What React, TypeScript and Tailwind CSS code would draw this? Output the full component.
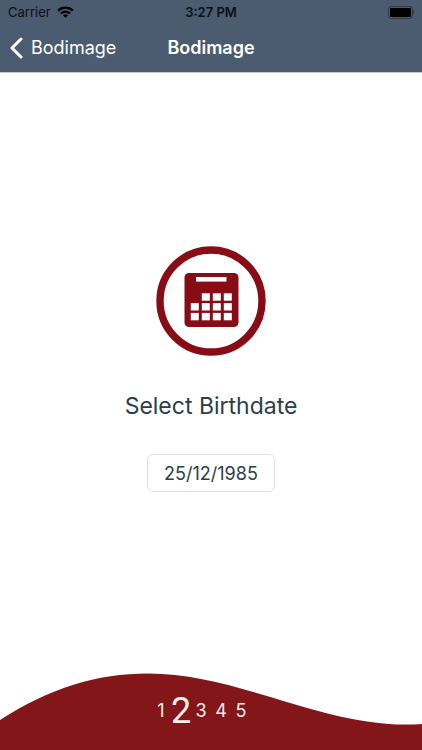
import { useState } from "react";

const STEPS = [1, 2, 3, 4, 5];

function StatusBar() {
  return (
    <div className="grid h-6 grid-cols-3 items-center px-2 text-[13px] leading-4 text-[#0b1017]">
      <div className="flex items-center gap-1.5">
        <span>Carrier</span>
        <svg viewBox="0 0 17 12" className="h-3 w-[17px]" fill="none" stroke="black" strokeWidth="2.2" aria-hidden="true">
          <path d="M1.1 4.6C5.2 0.6 11.8 0.6 15.9 4.6" />
          <path d="M3.9 7.5C6.5 5 10.5 5 13.1 7.5" />
          <path d="M8.5 11.8L5.9 9.2C7.3 7.8 9.7 7.8 11.1 9.2Z" fill="black" stroke="none" />
        </svg>
      </div>
      <span className="text-center font-semibold">3:27 PM</span>
      <svg viewBox="0 0 27 13" className="h-[13px] w-[27px] justify-self-end" aria-hidden="true">
        <rect x="1.5" y="0.5" width="24" height="12" rx="3" fill="none" stroke="#1c2633" strokeOpacity="0.65" />
        <rect x="3" y="2" width="21" height="9" rx="1" fill="black" />
        <path d="M26 4.5C27.4 5.1 27.4 7.9 26 8.5Z" fill="#1c2633" fillOpacity="0.7" />
      </svg>
    </div>
  );
}

function NavBar() {
  return (
    <nav className="grid h-12 grid-cols-[1fr_auto_1fr] items-center px-2.5 text-lg text-white">
      <button type="button" className="flex items-center gap-2 justify-self-start">
        <svg viewBox="0 0 13 22" className="h-[22px] w-[13px]" fill="none" stroke="currentColor" strokeWidth="3" strokeLinecap="round" strokeLinejoin="round" aria-hidden="true">
          <path d="M11 2L2 11L11 20" />
        </svg>
        Bodimage
      </button>
      <h1 className="font-semibold">Bodimage</h1>
    </nav>
  );
}

function CalendarBadge() {
  const cells = [
    [1, 0], [2, 0], [3, 0],
    [0, 1], [1, 1], [2, 1], [3, 1],
    [0, 2], [1, 2], [2, 2], [3, 2],
  ];

  return (
    <svg viewBox="0 0 110 110" className="size-[110px]" aria-hidden="true">
      <circle cx="55" cy="55" r="51" fill="none" stroke="#870c16" strokeWidth="7.4" />
      <rect x="28.5" y="27" width="54" height="54" rx="4.5" fill="#870c16" />
      <rect x="40" y="31" width="30.5" height="4.6" fill="white" />
      {cells.map(([col, row]) => (
        <rect key={`${col}-${row}`} x={34.8 + col * 11} y={47.3 + row * 9.8} width="8" height="7.4" fill="white" />
      ))}
    </svg>
  );
}

function StepFooter({ current }: { current: number }) {
  return (
    <footer className="relative">
      <svg viewBox="0 0 422 77" preserveAspectRatio="none" className="block h-[77px] w-full" aria-hidden="true">
        <path d="M0 47C50 15 97 0.5 148 0.5C235 0.5 320 51.5 405 51.5C411 51.5 417 51.4 422 51V77H0Z" fill="#831619" />
      </svg>
      <ol className="absolute inset-x-0 top-4 flex h-11 items-center justify-center pr-5 text-lg text-[#fbeeee]">
        {STEPS.map((step) => (
          <li
            key={step}
            aria-current={step === current ? "step" : undefined}
            className={step === current ? "w-5 text-center font-[Roboto,sans-serif] text-4xl" : "w-5 text-center"}
          >
            {step}
          </li>
        ))}
      </ol>
    </footer>
  );
}

export default function App() {
  const [birthdate, setBirthdate] = useState("25/12/1985");

  return (
    <div className="flex min-h-screen flex-col bg-white font-[Inter,sans-serif]">
      <header className="border-b border-[#c3c6ca] bg-[#4b5b70]">
        <StatusBar />
        <NavBar />
      </header>
      <main className="flex flex-1 flex-col items-center justify-center pb-2">
        <CalendarBadge />
        <label htmlFor="birthdate" className="mt-8 text-[23px] leading-9 text-[#2c3e4a]">
          Select Birthdate
        </label>
        <input
          id="birthdate"
          type="text"
          value={birthdate}
          onChange={(e) => setBirthdate(e.target.value)}
          className="mt-[30px] h-[38px] w-32 rounded-md border border-[#dfe1e3] text-center text-lg text-[#2c3e4a]"
        />
      </main>
      <StepFooter current={2} />
    </div>
  );
}
